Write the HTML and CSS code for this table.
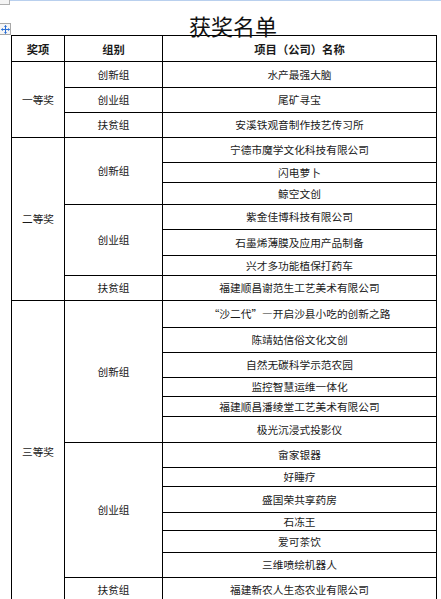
FILE: index.html
```html
<!DOCTYPE html>
<html lang="zh">
<head>
<meta charset="utf-8">
<title>获奖名单</title>
<link rel="stylesheet" href="styles.css">
</head>
<body>
<div class="ruler-line"></div>
<div class="corner-box"></div>
<div class="move-handle">
  <svg width="9" height="9" viewBox="0 0 9 9">
    <path d="M4.5 0.5 V8.5 M0.5 4.5 H8.5" stroke="#2a6fd6" stroke-width="1" fill="none"/>
    <path d="M4.5 0 L3 2 H6 Z M4.5 9 L3 7 H6 Z M0 4.5 L2 3 V6 Z M9 4.5 L7 3 V6 Z" fill="#2a6fd6"/>
  </svg>
</div>
<div class="page">
  <h1 class="title">获奖名单</h1>
  <table class="awards">
    <colgroup>
      <col class="c1"><col class="c2"><col class="c3">
    </colgroup>
    <tr class="h26"><th>奖项</th><th>组别</th><th>项目（公司）名称</th></tr>

    <tr class="h26"><td rowspan="3">一等奖</td><td>创新组</td><td>水产最强大脑</td></tr>
    <tr class="h25"><td>创业组</td><td>尾矿寻宝</td></tr>
    <tr class="h25"><td>扶贫组</td><td>安溪铁观音制作技艺传习所</td></tr>

    <tr class="h25"><td rowspan="7">二等奖</td><td rowspan="3">创新组</td><td>宁德市魔学文化科技有限公司</td></tr>
    <tr class="h20"><td>闪电萝卜</td></tr>
    <tr class="h22"><td>鲸空文创</td></tr>
    <tr class="h25"><td rowspan="3">创业组</td><td>紫金佳博科技有限公司</td></tr>
    <tr class="h26"><td>石墨烯薄膜及应用产品制备</td></tr>
    <tr class="h20"><td>兴才多功能植保打药车</td></tr>
    <tr class="h25"><td>扶贫组</td><td>福建顺昌谢范生工艺美术有限公司</td></tr>

    <tr class="h27"><td rowspan="14">三等奖</td><td rowspan="6">创新组</td><td>“沙二代”—开启沙县小吃的创新之路</td></tr>
    <tr class="h25"><td>陈靖姑信俗文化文创</td></tr>
    <tr class="h25"><td>自然无碳科学示范农园</td></tr>
    <tr class="h19"><td>监控智慧运维一体化</td></tr>
    <tr class="h20"><td>福建顺昌潘绫堂工艺美术有限公司</td></tr>
    <tr class="h26"><td>极光沉浸式投影仪</td></tr>
    <tr class="h25"><td rowspan="6">创业组</td><td>畲家银器</td></tr>
    <tr class="h19"><td>好睡疗</td></tr>
    <tr class="h26"><td>盛国荣共享药房</td></tr>
    <tr class="h18"><td>石冻王</td></tr>
    <tr class="h22"><td>爱可茶饮</td></tr>
    <tr class="h25"><td>三维喷绘机器人</td></tr>
    <tr class="h25"><td>扶贫组</td><td>福建新农人生态农业有限公司</td></tr>
  </table>
</div>
</body>
</html>
```

FILE: styles.css
```css
html, body {
  margin: 0;
  padding: 0;
  background: #ffffff;
}

body {
  font-family: "Noto Sans CJK SC", "Noto Sans", sans-serif;
  color: #1a1a1a;
  position: relative;
  overflow: hidden;
}

.ruler-line {
  position: absolute;
  left: 0;
  top: 0;
  width: 441px;
  height: 1px;
  background: #b9d0ee;
}

.corner-box {
  position: absolute;
  left: 0;
  top: 0;
  width: 9px;
  height: 4px;
  border-right: 1px solid #b0b0b0;
  border-bottom: 1px solid #b0b0b0;
  background: #f4f4f4;
}

.move-handle {
  position: absolute;
  left: 0;
  top: 23px;
  width: 10px;
  height: 10px;
  border: 1px solid #a8a8a8;
  border-left: none;
  background: #f6f6f6;
  display: flex;
  align-items: center;
  justify-content: center;
  z-index: 2;
}

.page {
  padding-top: 14px;
}

.title {
  margin: 0;
  padding-left: 25px;
  height: 21px;
  line-height: 22px;
  font-size: 22px;
  font-weight: 400;
  text-align: center;
  color: #111;
  position: relative;
  z-index: 1;
}

.awards {
  margin-left: 11px;
  width: 425px;
  border-collapse: collapse;
  table-layout: fixed;
  font-size: 10.7px;
}

.c1 { width: 53px; }
.c2 { width: 98px; }
.c3 { width: 274px; }

.awards th,
.awards td {
  border: 1px solid #000;
  padding: 0;
  text-align: center;
  vertical-align: middle;
  line-height: 12px;
  white-space: nowrap;
}

.awards th {
  font-size: 11.3px;
  font-weight: 700;
}

.h18 { height: 18px; }
.h19 { height: 19px; }
.h20 { height: 20px; }
.h22 { height: 22px; }
.h25 { height: 25px; }
.h26 { height: 26px; }
.h27 { height: 27px; }
```
